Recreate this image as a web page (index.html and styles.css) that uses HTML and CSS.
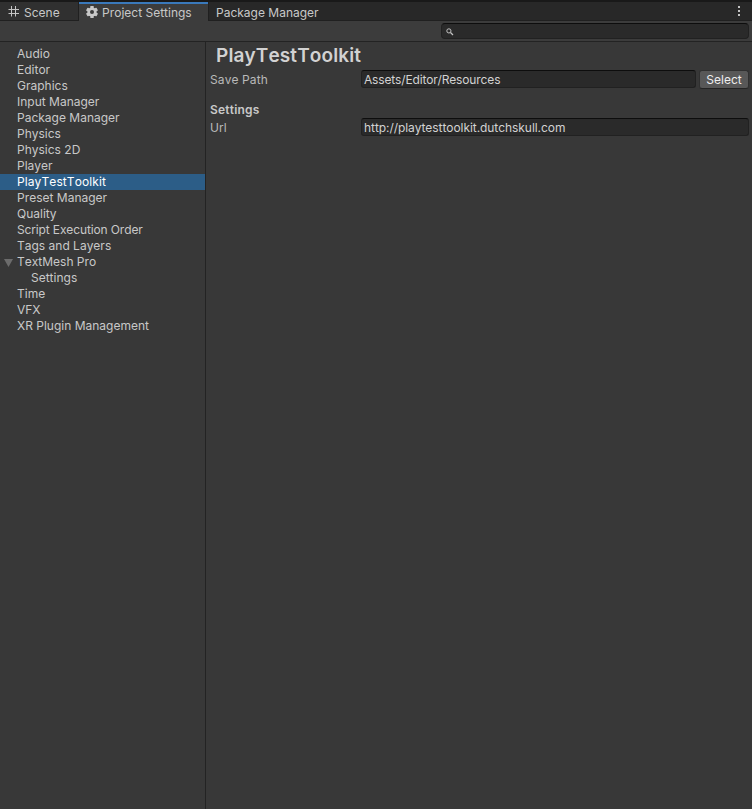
FILE: index.html
```html
<!DOCTYPE html>
<html lang="en">
<head>
<meta charset="utf-8">
<title>Project Settings</title>
<link rel="stylesheet" href="styles.css">
</head>
<body>
<div class="window">
  <header class="tabs">
    <div class="tab tab-scene">
      <svg class="grid-icon" width="11" height="11" viewBox="0 0 11 11"><path d="M3.5 0v10.5M7.5 0v10.5M.5 3.5h10.5M.5 7.5h10.5" fill="none" stroke="#c4c4c4" stroke-width="1"/></svg>
      <span>Scene</span>
    </div>
    <div class="tab tab-active">
      <svg class="gear-icon" width="12" height="12" viewBox="0 0 12 12"><g fill="#c8c8c8"><rect x="4.3" y="0" width="3.4" height="12" rx=".6"/><rect x="4.3" y="0" width="3.4" height="12" rx=".6" transform="rotate(60 6 6)"/><rect x="4.3" y="0" width="3.4" height="12" rx=".6" transform="rotate(120 6 6)"/><circle cx="6" cy="6" r="4.6"/></g><circle cx="6" cy="6" r="2" fill="#3c3c3c"/></svg>
      <span>Project Settings</span>
    </div>
    <div class="tab tab-package"><span>Package Manager</span></div>
    <div class="menu"><svg width="2" height="10" viewBox="0 0 2 10"><path d="M0 0h2v2H0zM0 4h2v2H0zM0 8h2v2H0z" fill="#c4c4c4"/></svg></div>
  </header>
  <div class="toolbar">
    <div class="search">
      <svg width="8" height="8" viewBox="0 0 8 8"><circle cx="2.9" cy="2.9" r="2.1" fill="none" stroke="#c4c4c4" stroke-width="1"/><path d="M4.5 4.5L7 7" stroke="#c4c4c4" stroke-width="1.3"/></svg>
    </div>
  </div>
  <main class="body">
    <nav class="sidebar">
      <div class="item">Audio</div>
      <div class="item">Editor</div>
      <div class="item">Graphics</div>
      <div class="item">Input Manager</div>
      <div class="item">Package Manager</div>
      <div class="item">Physics</div>
      <div class="item">Physics 2D</div>
      <div class="item">Player</div>
      <div class="item selected">PlayTestToolkit</div>
      <div class="item">Preset Manager</div>
      <div class="item">Quality</div>
      <div class="item tight">Script Execution Order</div>
      <div class="item">Tags and Layers</div>
      <div class="item parent"><svg class="arrow" width="9" height="8" viewBox="0 0 9 8"><path d="M0 0h9L4.5 8z" fill="#6c6c6c"/></svg>TextMesh Pro</div>
      <div class="item child">Settings</div>
      <div class="item">Time</div>
      <div class="item">VFX</div>
      <div class="item">XR Plugin Management</div>
    </nav>
    <section class="panel">
      <h1>PlayTestToolkit</h1>
      <div class="row">
        <span class="label">Save Path</span>
        <div class="field tight">Assets/Editor/Resources</div>
        <div class="button">Select</div>
      </div>
      <h2>Settings</h2>
      <div class="row">
        <span class="label">Url</span>
        <div class="field">http://playtesttoolkit.dutchskull.com</div>
      </div>
    </section>
  </main>
</div>
</body>
</html>
```
FILE: styles.css
```css
* { box-sizing: border-box; }
body {
  margin: 0;
  background: #383838;
  color: #c8c8c8;
  font: 12px/16px Inter, "Liberation Sans", sans-serif;
  font-kerning: none;
  white-space: nowrap;
}
.window { display: flex; flex-direction: column; height: 809px; overflow: hidden; }
.tabs {
  display: flex;
  height: 21px;
  background: #282828;
  border-top: 2px solid #191919;
}
.tab { display: flex; height: 19px; padding-top: 3px; border-bottom: 1px solid #202020; }
.tab-scene { width: 79px; padding-left: 8px; background: #303030; border-right: 1px solid #202020; }
.grid-icon { margin: 1px 5px 0 0; }
.tab-active {
  width: 129px;
  padding: 1px 0 0 7px;
  background: #3c3c3c;
  border-top: 2px solid #3a79bb;
  border-bottom: 0;
}
.gear-icon { margin: 1px 4px 0 0; }
.tab-package { flex: 1; padding-left: 7px; border-left: 1px solid #202020; }
.menu { width: 14px; height: 19px; padding-top: 4px; border-bottom: 1px solid #202020; }
.menu svg { display: block; }
.toolbar {
  display: flex;
  justify-content: flex-end;
  height: 21px;
  padding: 2px 3px 0 0;
  background: #3c3c3c;
  border-bottom: 1px solid #232323;
}
.search {
  width: 308px;
  height: 16px;
  padding: 4px 0 0 4px;
  background: #2a2a2a;
  border: 1px solid #212121;
  border-top-color: #0d0d0d;
  border-radius: 4px;
}
.search svg { display: block; }
.body { display: flex; flex: 1; }
.sidebar { width: 206px; padding-top: 4px; border-right: 1px solid #232323; }
.item { height: 16px; padding-left: 17px; }
.selected { background: #2c5d87; color: #fff; letter-spacing: 0.1px; }
.parent { display: flex; align-items: center; padding-left: 4px; }
.arrow { margin: 2px 4px 0 0; }
.child { padding-left: 31px; }
.panel { flex: 1; padding: 0 3px 0 4px; }
h1 { margin: 0 0 0 6px; height: 28px; font-size: 19px; line-height: 27px; font-weight: 600; letter-spacing: 0.12px; color: #d2d2d2; }
h2 { margin: 11px 0 0; height: 18px; padding-top: 1px; font-size: 12px; line-height: 16px; font-weight: 600; letter-spacing: 0.2px; }
.row { display: flex; height: 20px; }
h2 + .row { margin-top: -1px; }
.label { width: 151px; padding-top: 2px; color: #b9b9b9; letter-spacing: 0.1px; }
.field {
  flex: 1;
  height: 18px;
  padding-left: 2px;
  background: #2a2a2a;
  border: 1px solid #212121;
  border-top-color: #0d0d0d;
  border-radius: 3px;
  color: #d2d2d2;
  line-height: 18px;
  letter-spacing: -0.06px;
}
.item.tight { letter-spacing: -0.12px; }
.field.tight { letter-spacing: -0.16px; }
.button {
  width: 50px;
  height: 19px;
  margin-left: 3px;
  background: #585858;
  border: 1px solid #303030;
  border-bottom-color: #242424;
  border-radius: 3px;
  color: #eee;
  line-height: 18px;
  text-align: center;
}
```
